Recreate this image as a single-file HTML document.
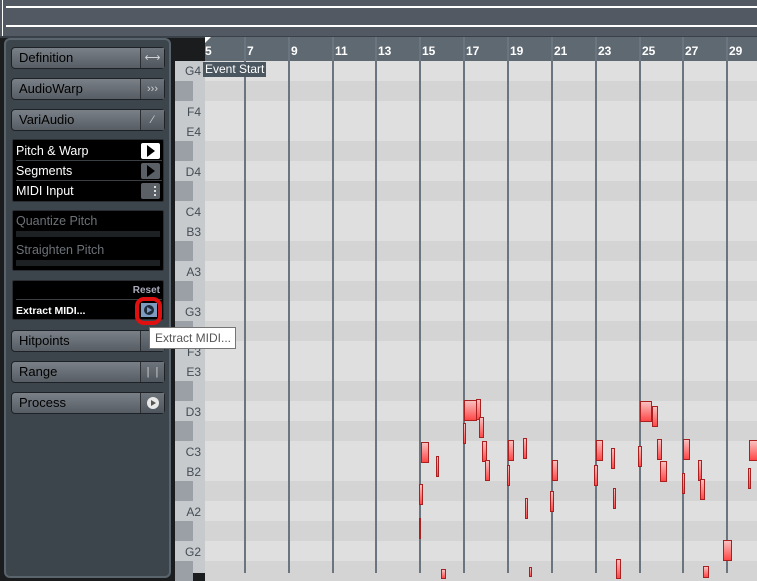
<!DOCTYPE html><html><head><style>
*{margin:0;padding:0;box-sizing:border-box}
body{width:757px;height:573px;overflow:hidden;background:#1b1c1e;font-family:"Liberation Sans",sans-serif;position:relative}
.a{position:absolute}
.top{left:0;top:0;width:757px;height:36px;background:#525963}
.wl{height:2px;background:#fff;left:6px;width:751px}
.panel{left:4px;top:38px;width:167px;height:540px;background:#3d454c;border:2px solid #5a646c;border-radius:6px}
.btn{position:absolute;left:11px;width:154px;height:22px;border:1px solid #1e2226;border-radius:4px;background:linear-gradient(#7a8087,#575d64);color:#000;font-size:13px;line-height:20px;padding-left:7px}
.btn .r{position:absolute;right:0;top:0;width:24px;height:20px;border-left:1px solid #2a2e32;background:linear-gradient(#6e747b,#50565d);color:#cfd3d6;font-size:11px;text-align:center}
.blk{position:absolute;left:12px;width:152px;background:#000;border:1px solid #2a2e32;border-radius:2px}
.row{position:absolute;left:3px;width:146px;height:19px;color:#fff;font-size:12.5px;line-height:19px;border-bottom:1px solid #3a3f44}
.row .i{position:absolute;right:2px;top:1px;width:19px;height:16px;background:#fff;border-radius:2px}
.kb{left:175px;top:61px;width:30px;height:512px;background:#c6cacd}
.bk{position:absolute;left:0;width:18px;height:20px;background:#9aa0a5}
.kl{position:absolute;right:4px;font-size:12px;color:#444c54}
.grid{left:205px;top:61px;width:552px;height:512px;background:#dfdfdf}
.dr{position:absolute;left:0;width:552px;height:20px;background:#d4d4d4}
.vl{position:absolute;top:37px;width:2px;height:536px;background:#6b7580}
.ruler{left:205px;top:37px;width:552px;height:24px;background:#5f6972}
.num{position:absolute;top:7px;color:#fff;font-size:12px;font-weight:bold}
.n{position:absolute;background:linear-gradient(#f8c0c0,#ff4848);border:1px solid #a82020}
</style></head><body>
<div class="a top"></div>
<div class="a wl" style="top:6px"></div>
<div class="a wl" style="top:25px"></div>
<div class="a" style="left:2px;top:0;width:1px;height:36px;background:#fff"></div>
<div class="a" style="left:0;top:36px;width:757px;height:2px;background:#3a4047"></div>

<div class="a panel"></div>
<div class="btn" style="top:47px">Definition<div class="r">⟷</div></div>
<div class="btn" style="top:78px">AudioWarp<div class="r">›››</div></div>
<div class="btn" style="top:109px">VariAudio<div class="r">⁄</div></div>
<div class="blk" style="top:139px;height:63px">
 <div class="row" style="top:2px">Pitch &amp; Warp<div class="i"><svg width="19" height="16"><path d="M6 2L14 8L6 14Z" fill="#000"/></svg></div></div>
 <div class="row" style="top:22px">Segments<div class="i" style="background:#5a6066"><svg width="19" height="16"><path d="M6 2L14 8L6 14Z" fill="#000"/></svg></div></div>
 <div class="row" style="top:42px;border:0">MIDI Input<div class="i" style="background:#5a6066"><svg width="19" height="16"><rect x="13" y="3" width="2" height="2" fill="#ddd"/><rect x="13" y="7" width="2" height="2" fill="#ddd"/><rect x="13" y="11" width="2" height="2" fill="#ddd"/></svg></div></div>
</div>
<div class="blk" style="top:210px;height:61px">
 <div class="a" style="left:3px;top:3px;color:#6c7278;font-size:12.5px">Quantize Pitch</div>
 <div class="a" style="left:3px;top:20px;width:144px;height:6px;background:#1e2124"></div>
 <div class="a" style="left:3px;top:32px;color:#6c7278;font-size:12.5px">Straighten Pitch</div>
 <div class="a" style="left:3px;top:49px;width:144px;height:6px;background:#1e2124"></div>
</div>
<div class="blk" style="top:280px;height:40px">
 <div class="a" style="right:3px;top:4px;color:#aab;font-size:10px;font-weight:bold">Reset</div>
 <div class="a" style="left:3px;top:18px;width:146px;height:1px;background:#3a3f44"></div>
 <div class="a" style="left:3px;top:24px;color:#fff;font-size:10.5px;font-weight:bold">Extract MIDI...</div>
</div>
<div class="a" style="left:135px;top:297px;width:27px;height:28px;border:4px solid #e01010;border-radius:9px"></div>
<div class="a" style="left:141px;top:303px;width:16px;height:14px;background:#7d9ac0"><svg width="16" height="14"><circle cx="8" cy="7" r="5" fill="#1d2a3a"/><path d="M6 4L11 7L6 10Z" fill="#7d9ac0"/></svg></div>
<div class="btn" style="top:330px">Hitpoints<div class="r"></div></div>
<div class="btn" style="top:361px">Range<div class="r">|&nbsp;&nbsp;|</div></div>
<div class="btn" style="top:392px">Process<div class="r"><svg width="14" height="14" style="margin-top:3px"><circle cx="7" cy="7" r="6" fill="#e8e8e8"/><path d="M5 4L10 7L5 10Z" fill="#555"/></svg></div></div>

<div class="a kb">
<div class="bk" style="top:20px"></div><div class="bk" style="top:80px"></div><div class="bk" style="top:120px"></div><div class="bk" style="top:180px"></div><div class="bk" style="top:220px"></div><div class="bk" style="top:260px"></div><div class="bk" style="top:320px"></div><div class="bk" style="top:360px"></div><div class="bk" style="top:420px"></div><div class="bk" style="top:460px"></div><div class="bk" style="top:500px"></div>
<div class="kl" style="top:3px">G4</div><div class="kl" style="top:44px">F4</div><div class="kl" style="top:64px">E4</div><div class="kl" style="top:104px">D4</div><div class="kl" style="top:144px">C4</div><div class="kl" style="top:164px">B3</div><div class="kl" style="top:204px">A3</div><div class="kl" style="top:244px">G3</div><div class="kl" style="top:284px">F3</div><div class="kl" style="top:304px">E3</div><div class="kl" style="top:344px">D3</div><div class="kl" style="top:384px">C3</div><div class="kl" style="top:404px">B2</div><div class="kl" style="top:444px">A2</div><div class="kl" style="top:484px">G2</div>
</div>
<div class="a grid">
<div class="dr" style="top:20px"></div><div class="dr" style="top:80px"></div><div class="dr" style="top:120px"></div><div class="dr" style="top:180px"></div><div class="dr" style="top:220px"></div><div class="dr" style="top:260px"></div><div class="dr" style="top:320px"></div><div class="dr" style="top:360px"></div><div class="dr" style="top:420px"></div><div class="dr" style="top:460px"></div><div class="dr" style="top:500px"></div>
</div>
<div class="a ruler">
<div class="num" style="left:0">5</div><div class="num" style="left:42px">7</div><div class="num" style="left:86px">9</div><div class="num" style="left:130px">11</div><div class="num" style="left:173px">13</div><div class="num" style="left:217px">15</div><div class="num" style="left:261px">17</div><div class="num" style="left:305px">19</div><div class="num" style="left:349px">21</div><div class="num" style="left:393px">23</div><div class="num" style="left:437px">25</div><div class="num" style="left:480px">27</div><div class="num" style="left:524px">29</div>
</div>
<div class="vl" style="left:244px"></div><div class="vl" style="left:288px"></div><div class="vl" style="left:332px"></div><div class="vl" style="left:375px"></div><div class="vl" style="left:419px"></div><div class="vl" style="left:463px"></div><div class="vl" style="left:507px"></div><div class="vl" style="left:551px"></div><div class="vl" style="left:595px"></div><div class="vl" style="left:639px"></div><div class="vl" style="left:682px"></div><div class="vl" style="left:726px"></div>
<div class="a" style="left:205px;top:37px;width:0;height:0;border-top:6px solid #fff;border-right:6px solid transparent"></div>
<div class="a" style="left:203px;top:62px;background:#4a5660;color:#fff;font-size:12px;padding:0 2px;height:15px;line-height:15px">Event Start</div>

<div class="n" style="left:421px;top:442px;width:8px;height:21px"></div>
<div class="n" style="left:436px;top:456px;width:3px;height:21px"></div>
<div class="n" style="left:419px;top:484px;width:4px;height:21px"></div>
<div class="n" style="left:419px;top:518px;width:2px;height:21px"></div>
<div class="n" style="left:441px;top:569px;width:5px;height:10px"></div>
<div class="n" style="left:464px;top:400px;width:13px;height:21px"></div>
<div class="n" style="left:476px;top:399px;width:5px;height:21px"></div>
<div class="n" style="left:463px;top:423px;width:3px;height:21px"></div>
<div class="n" style="left:479px;top:417px;width:5px;height:21px"></div>
<div class="n" style="left:482px;top:441px;width:5px;height:21px"></div>
<div class="n" style="left:485px;top:460px;width:5px;height:21px"></div>
<div class="n" style="left:508px;top:440px;width:6px;height:21px"></div>
<div class="n" style="left:507px;top:465px;width:3px;height:21px"></div>
<div class="n" style="left:523px;top:438px;width:4px;height:21px"></div>
<div class="n" style="left:525px;top:498px;width:3px;height:21px"></div>
<div class="n" style="left:529px;top:567px;width:3px;height:10px"></div>
<div class="n" style="left:552px;top:460px;width:6px;height:21px"></div>
<div class="n" style="left:550px;top:491px;width:4px;height:21px"></div>
<div class="n" style="left:596px;top:440px;width:7px;height:21px"></div>
<div class="n" style="left:594px;top:465px;width:4px;height:21px"></div>
<div class="n" style="left:611px;top:448px;width:4px;height:21px"></div>
<div class="n" style="left:613px;top:488px;width:3px;height:21px"></div>
<div class="n" style="left:616px;top:559px;width:5px;height:20px"></div>
<div class="n" style="left:640px;top:401px;width:12px;height:21px"></div>
<div class="n" style="left:652px;top:406px;width:6px;height:21px"></div>
<div class="n" style="left:638px;top:446px;width:4px;height:21px"></div>
<div class="n" style="left:657px;top:439px;width:5px;height:21px"></div>
<div class="n" style="left:660px;top:461px;width:7px;height:21px"></div>
<div class="n" style="left:683px;top:439px;width:7px;height:21px"></div>
<div class="n" style="left:682px;top:473px;width:3px;height:21px"></div>
<div class="n" style="left:698px;top:460px;width:4px;height:21px"></div>
<div class="n" style="left:700px;top:479px;width:5px;height:21px"></div>
<div class="n" style="left:703px;top:566px;width:6px;height:12px"></div>
<div class="n" style="left:723px;top:540px;width:9px;height:21px"></div>
<div class="n" style="left:749px;top:440px;width:10px;height:21px"></div>
<div class="n" style="left:748px;top:468px;width:3px;height:21px"></div>

<div class="a" style="left:149px;top:327px;width:87px;height:22px;background:#fff;border:1px solid #767676;color:#555;font-size:12px;line-height:20px;padding-left:5px;white-space:nowrap">Extract MIDI...</div>
</body></html>
